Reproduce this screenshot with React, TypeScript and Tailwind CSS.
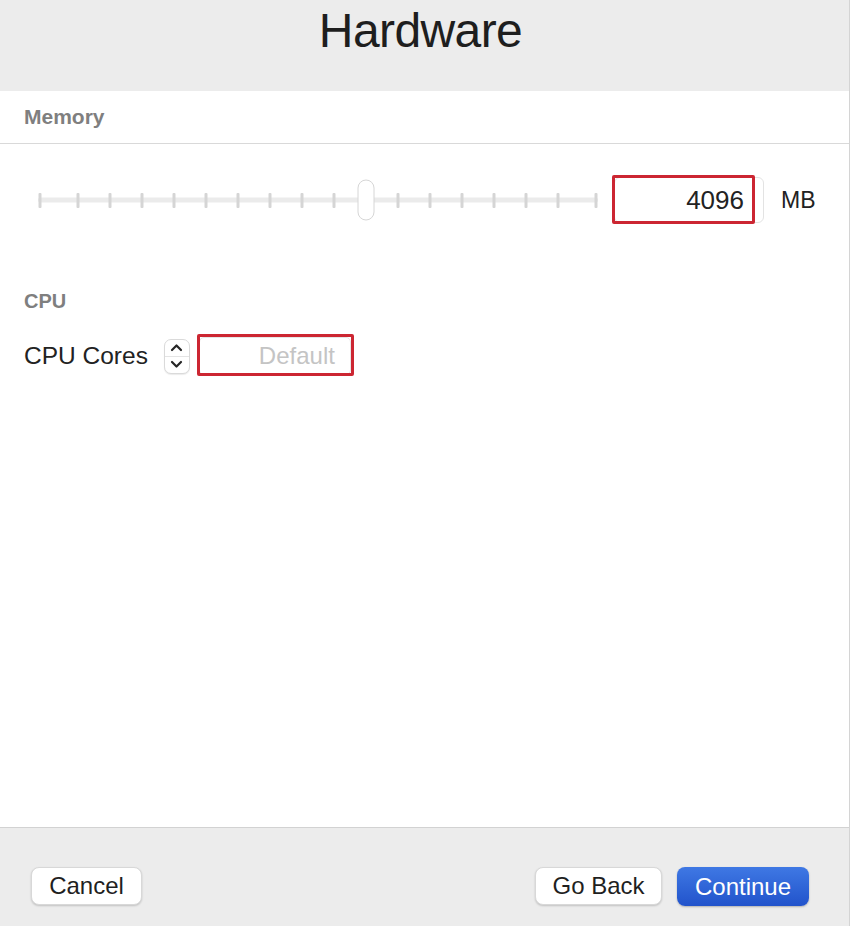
import React from 'react';

const ticks = [40, 78, 110, 142, 174, 206, 238, 270, 302, 334, 398, 430, 462, 494, 526, 558, 596];

function MemorySlider() {
    // slider is drawn as a picture, offset 34px from page left
    const off = 34;
    return (
        <svg width="566" height="44" viewBox="0 0 566 44" className="shrink-0">
            <rect x={38 - off} y="19.5" width={560} height="5" rx="2.5" fill="#ebebeb" />
            {ticks.map((t) => (
                <rect key={t} x={t - off - 1.5} y="15" width="3" height="15" rx="1" fill="#d5d5d5" />
            ))}
            <rect x={358 - off} y="2" width="16" height="40" rx="8" fill="#ffffff" stroke="#d6d6d6" strokeWidth="1" />
        </svg>
    );
}

function Stepper() {
    return (
        <div className="w-[26px] h-[35px] rounded-[7px] border border-[#dadada] bg-white flex flex-col shadow-[0_1px_1px_rgba(0,0,0,0.08)]">
            <div className="flex-1 flex items-center justify-center border-b border-[#e4e4e4]">
                <svg width="13" height="9" viewBox="0 0 13 9">
                    <path d="M2 7 L6.5 2.5 L11 7" fill="none" stroke="#262626" strokeWidth="2.2" strokeLinecap="round" strokeLinejoin="round" />
                </svg>
            </div>
            <div className="flex-1 flex items-center justify-center">
                <svg width="13" height="9" viewBox="0 0 13 9">
                    <path d="M2 2 L6.5 6.5 L11 2" fill="none" stroke="#262626" strokeWidth="2.2" strokeLinecap="round" strokeLinejoin="round" />
                </svg>
            </div>
        </div>
    );
}

export default function App() {
    return (
        <div className="w-[850px] h-[926px] flex flex-col bg-white font-['Liberation_Sans',Arial,sans-serif] border-r border-[#d4d4d4]">
            {/* Title bar */}
            <div className="h-[91px] bg-[#ececec] flex justify-center pt-[7px] pr-[8px] shrink-0">
                <h1 className="text-[48px] leading-none text-[#1e1e1e] tracking-[-0.6px]">Hardware</h1>
            </div>

            {/* Memory section header */}
            <div className="h-[53px] flex items-center px-[24px] border-b border-[#d9d9d9] shrink-0">
                <span className="text-[21px] font-bold text-[#7f7f7f]">Memory</span>
            </div>

            {/* Memory slider row */}
            <div className="h-[112px] flex items-center pl-[34px] shrink-0">
                <MemorySlider />
                <div className="relative ml-[14px] w-[150px] h-[46px] rounded-[6px] border border-[#e3e3e3] bg-white flex items-center justify-end pr-[19px]">
                    <span className="text-[26px] text-[#222]">4096</span>
                    <div className="absolute left-[-3px] top-[-3px] w-[143px] h-[49px] border-[3px] border-[#cc2632] rounded-[2px]" />
                </div>
                <span className="ml-[17px] text-[23px] text-[#222]">MB</span>
            </div>

            {/* CPU section */}
            <div className="mt-[30px] h-[30px] flex items-center px-[24px] shrink-0">
                <span className="text-[20px] font-bold text-[#7f7f7f]">CPU</span>
            </div>
            <div className="mt-[18px] h-[44px] flex items-center pl-[24px] shrink-0">
                <span className="text-[24.5px] text-[#222]">CPU Cores</span>
                <div className="ml-[16px]">
                    <Stepper />
                </div>
                <div className="relative ml-[9px] w-[152px] h-[38px] rounded-[5px] border border-[#e6e6e6] bg-white flex items-center justify-end pr-[15px]">
                    <span className="text-[24px] text-[#c4c4c4]">Default</span>
                    <div className="absolute left-[-3px] top-[-4px] w-[157px] h-[42px] border-[3px] border-[#cc2632] rounded-[2px]" />
                </div>
            </div>

            <div className="flex-1" />

            {/* Footer */}
            <div className="h-[99px] bg-[#ececec] border-t border-[#d2d2d2] flex items-start pt-[39px] px-[31px] pr-[40px] shrink-0">
                <button className="w-[111px] h-[38px] rounded-[8px] bg-white border border-[#d8d8d8] shadow-[0_1px_2px_rgba(0,0,0,0.18)] text-[24px] text-[#1f1f1f]">
                    Cancel
                </button>
                <div className="ml-auto flex gap-[15px]">
                    <button className="w-[127px] h-[38px] rounded-[8px] bg-white border border-[#d8d8d8] shadow-[0_1px_2px_rgba(0,0,0,0.18)] text-[24px] text-[#1f1f1f]">
                        Go Back
                    </button>
                    <button className="w-[132px] h-[39px] rounded-[8px] bg-gradient-to-b from-[#3f78e4] to-[#2253cb] shadow-[0_1px_2px_rgba(0,0,0,0.25)] text-[24px] text-white">
                        Continue
                    </button>
                </div>
            </div>
        </div>
    );
}
